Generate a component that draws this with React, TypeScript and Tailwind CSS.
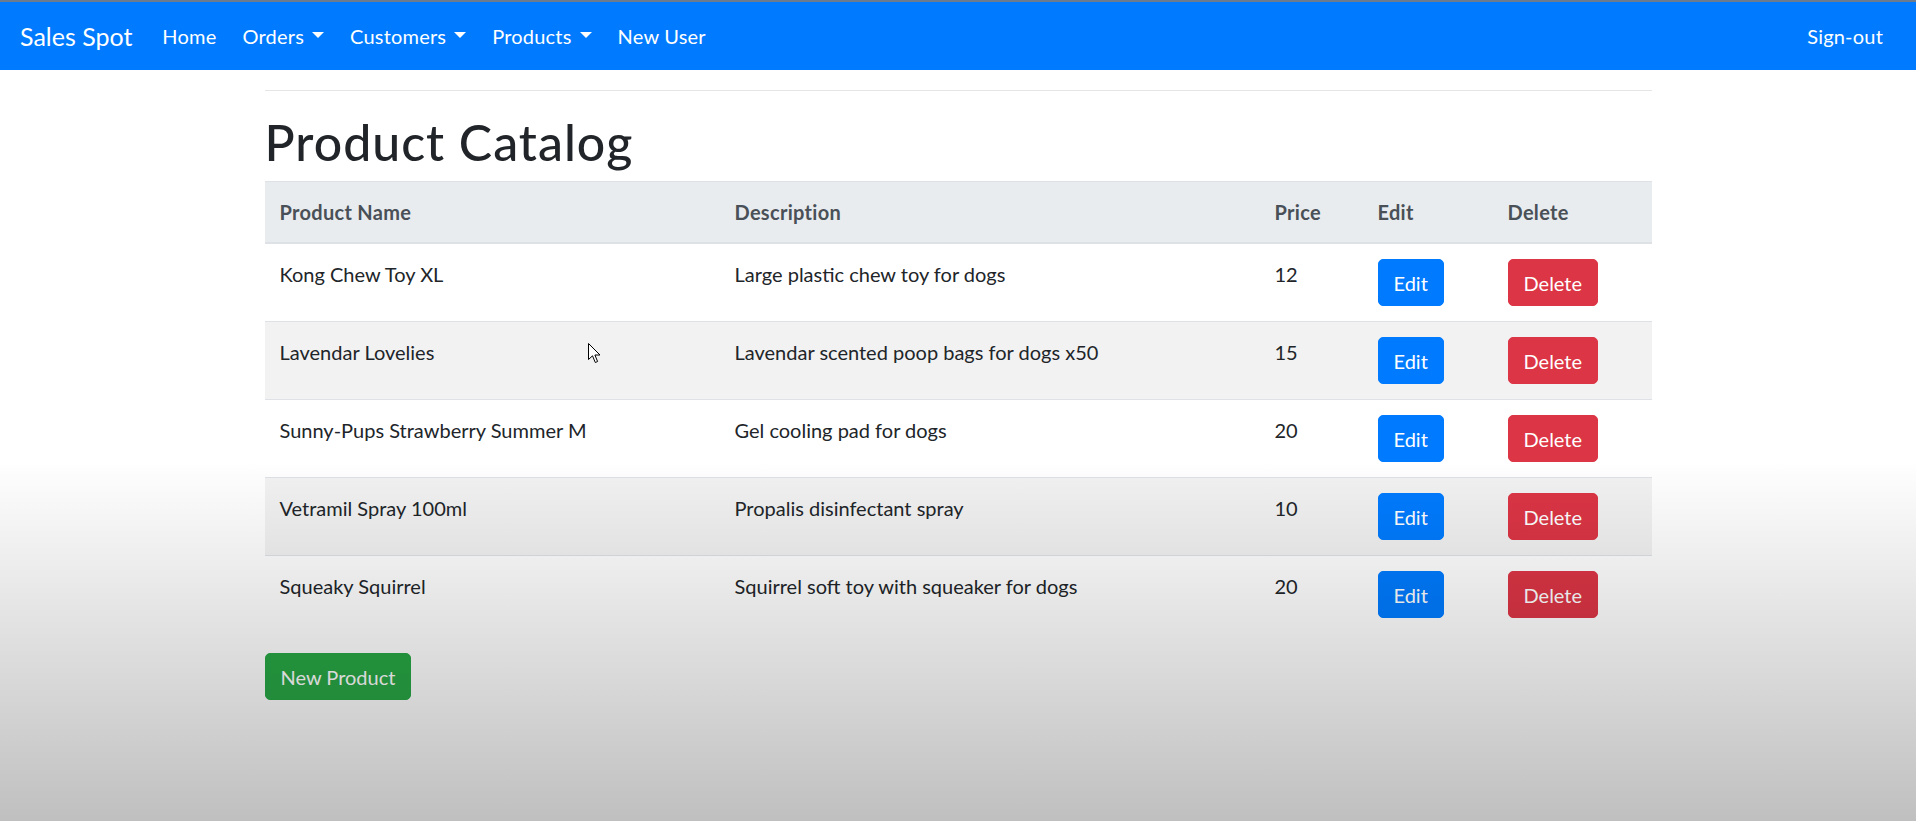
const products = [
  { name: "Kong Chew Toy XL", desc: "Large plastic chew toy for dogs", price: 12 },
  { name: "Lavendar Lovelies", desc: "Lavendar scented poop bags for dogs x50", price: 15 },
  { name: "Sunny-Pups Strawberry Summer M", desc: "Gel cooling pad for dogs", price: 20 },
  { name: "Vetramil Spray 100ml", desc: "Propalis disinfectant spray", price: 10 },
  { name: "Squeaky Squirrel", desc: "Squirrel soft toy with squeaker for dogs", price: 20 },
];

const Caret = () => (
  <span className="ml-[8px] inline-block h-0 w-0 translate-y-[-4px] border-x-[6px] border-t-[6px] border-x-transparent border-t-white align-middle" />
);

const NavLink = ({ label, dropdown }: { label: string; dropdown?: boolean }) => (
  <a className="px-[13px] py-[10px] text-[20px] leading-[30px] tracking-[0.2px] text-white">
    {label}
    {dropdown && <Caret />}
  </a>
);

const App = () => {
  return (
    <div className="relative min-h-[821px] overflow-hidden bg-white font-['Lato','Noto_Sans',sans-serif] text-[20px] leading-[30px] text-[#212529]">
      {/* Navbar */}
      <nav className="flex h-[70px] items-center border-t-2 border-[#6d7b8f] bg-[#007bff] pl-5 pr-[20px]">
        <a className="mr-[17px] text-[25px] leading-[37px] text-white">Sales Spot</a>
        <NavLink label="Home" />
        <NavLink label="Orders" dropdown />
        <NavLink label="Customers" dropdown />
        <NavLink label="Products" dropdown />
        <NavLink label="New User" />
        <div className="ml-auto">
          <NavLink label="Sign-out" />
        </div>
      </nav>

      <main className="mx-auto w-[1387px]">
        <hr className="my-5 border-t border-black/10" />
        <h1 className="mb-[10px] pt-[2px] text-[50px] font-medium leading-[58px] tracking-[1px]">Product Catalog</h1>

        <table className="mb-5 w-full table-fixed border-collapse">
          <colgroup>
            <col className="w-[455px]" />
            <col className="w-[540px]" />
            <col className="w-[103px]" />
            <col className="w-[130px]" />
            <col className="w-[159px]" />
          </colgroup>
          <thead>
            <tr className="bg-[#e9ecef] text-[#495057]">
              {["Product Name", "Description", "Price", "Edit", "Delete"].map((h) => (
                <th
                  key={h}
                  className="border-t border-b-2 border-[#dee2e6] p-[15px] text-left align-bottom font-bold tracking-[0.3px]"
                >
                  {h}
                </th>
              ))}
            </tr>
          </thead>
          <tbody>
            {products.map((p, i) => (
              <tr key={p.name} className={i % 2 === 1 ? "bg-black/5" : ""}>
                <td className="border-t border-[#dee2e6] p-[15px] align-top">{p.name}</td>
                <td className="border-t border-[#dee2e6] p-[15px] align-top">{p.desc}</td>
                <td className="border-t border-[#dee2e6] p-[15px] align-top">{p.price}</td>
                <td className="border-t border-[#dee2e6] p-[15px] align-top">
                  <button className="h-[47px] rounded-[5px] border border-[#007bff] bg-[#007bff] px-[15px] text-white">
                    Edit
                  </button>
                </td>
                <td className="border-t border-[#dee2e6] p-[15px] align-top">
                  <button className="h-[47px] rounded-[5px] border border-[#dc3545] bg-[#dc3545] px-[15px] text-white">
                    Delete
                  </button>
                </td>
              </tr>
            ))}
          </tbody>
        </table>

        <button className="h-[47px] rounded-[5px] border border-[#28a745] bg-[#28a745] px-[15px] text-white">
          New Product
        </button>
      </main>

      {/* mouse pointer */}
      <svg
        className="absolute left-[588px] top-[343px]"
        width="13"
        height="21"
        viewBox="0 0 13 21"
      >
        <path
          d="M0.5 0.5 L0.5 16.5 L4.5 12.8 L7.3 19.5 L9.6 18.5 L6.9 12 L12 12 Z"
          fill="#fff"
          stroke="#000"
          strokeWidth="1"
        />
      </svg>

      {/* darkening vignette at the bottom */}
      <div className="pointer-events-none absolute inset-x-0 bottom-0 h-[361px] bg-linear-to-b from-transparent to-black/25" />
    </div>
  );
};

export default App;
